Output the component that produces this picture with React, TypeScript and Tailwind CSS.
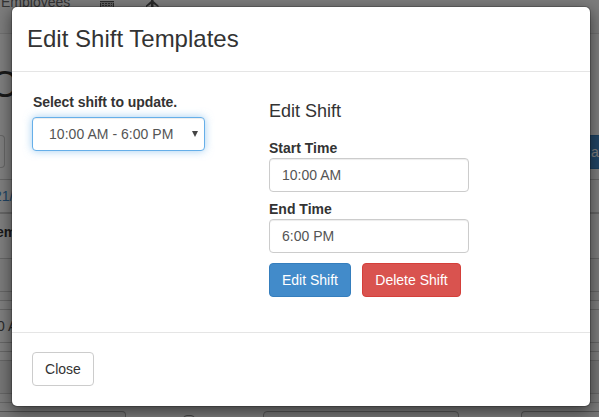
import type { ReactNode } from 'react';

function Line({ children, className = '' }: { children?: ReactNode; className?: string }) {
  return <div className={`shrink-0 overflow-hidden border-b border-[#ccc] ${className}`}>{children}</div>;
}

function Schedule() {
  return (
    <div className="flex h-full flex-col overflow-hidden bg-white">
      <nav className="relative h-[34px] shrink-0 border-b border-[#e0e0e0] bg-[#f8f8f8]">
        <span className="absolute left-px top-[-8px] text-[#666]">Employees</span>
        <svg className="absolute left-[100px] top-0" width="14" height="8" viewBox="0 0 14 8" fill="#555">
          <path d="M0 1h14v1H0zM0 3h1v5H0zM13 3h1v5h-1zM0 7h14v1H0zM2 3h2v1H2zM5 3h2v1H5zM8 3h2v1H8zM11 3h1v1h-1zM2 5h2v1H2zM5 5h2v1H5zM8 5h2v1H8zM11 5h1v1h-1z" />
          <path d="M0 1h14v6H0z" opacity=".35" />
        </svg>
        <svg className="absolute left-[145px] top-0" width="15" height="8" viewBox="0 0 15 8" fill="#555">
          <path d="M6 0h2.5v1l5 4.5v1.7L8.5 4v4H6V4L1 7.2V5.5L6 1z" />
        </svg>
      </nav>
      <h1 className="ml-[-9px] mt-[31px] h-10 shrink-0 text-4xl leading-10 text-[#333]">O</h1>
      <div className="mt-[30px] flex h-[33px] shrink-0 justify-between">
        <div className="w-[5px] rounded-r border border-l-0 border-[#ccc]" />
        <button className="h-[34px] w-[14px] overflow-hidden border-y border-[#357ebd] bg-[#428bca] pl-1.5 text-left text-white">at</button>
      </div>
      <Line className="h-3" />
      <Line className="h-[33px] pt-1.5 text-[#428bca]"><span className="ml-[-6px]">21/</span></Line>
      <Line className="h-px" />
      <Line className="h-[45px] pt-2 font-bold text-[#333]"><span className="ml-[-4px]">em</span></Line>
      <Line className="h-[33px] bg-[#f9f9f9]" />
      <Line className="h-[9px] bg-[#f9f9f9]" />
      <Line className="h-[9px]" />
      <Line className="h-[33px] pt-1.5 text-[#555]"><span className="ml-[-3px]">0 AM</span></Line>
      <Line className="h-[9px]" />
      <Line className="h-[9px]" />
      <Line className="h-[33px] bg-[#eee]" />
      <Line className="h-[9px] bg-[#f9f9f9]" />
      <div className="flex h-[15px] shrink-0 items-start bg-[#f9f9f9] pt-2">
        <div className="h-[34px] w-[126px] shrink-0 rounded-tr border border-l-0 border-[#aaa] bg-[#eee]" />
        <div className="ml-[57px] mt-1 h-3 w-3 shrink-0 rounded-sm border border-[#888]" />
        <div className="ml-[68px] h-[34px] w-[196px] shrink-0 rounded border border-[#aaa] bg-[#eee]" />
        <div className="ml-[62px] h-[34px] flex-1 rounded-l border border-r-0 border-[#aaa] bg-[#eee]" />
      </div>
    </div>
  );
}

const field = 'block h-[34px] w-[200px] rounded border border-[#ccc] bg-white px-3 text-sm text-[#555] shadow-[inset_0_1px_1px_rgba(0,0,0,0.075)] outline-none';

export default function App() {
  return (
    <div className="relative h-[417px] w-[599px] overflow-hidden font-['Liberation_Sans',sans-serif] text-sm text-[#333]">
      <Schedule />
      <div className="absolute inset-0 bg-black/50" />
      <div className="absolute left-[11px] top-1.5 flex h-[401px] w-[580px] flex-col rounded-md border border-black/20 bg-white bg-clip-padding shadow-[0_5px_15px_rgba(0,0,0,0.5)]">
        <header className="h-[65px] shrink-0 border-b border-[#e5e5e5] p-[15px]">
          <h3 className="text-2xl leading-[34px]">Edit Shift Templates</h3>
        </header>
        <main className="flex h-[260px] shrink-0 p-5">
          <section className="w-[237px]">
            <label className="mb-[5px] block pl-px font-bold leading-5 tracking-[-0.06px]">Select shift to update.</label>
            <button className="flex h-[34px] w-[173px] items-center justify-between rounded border border-[#66afe9] bg-white pl-4 pr-1.5 text-[#555] shadow-[inset_0_1px_1px_rgba(0,0,0,0.075),0_0_8px_rgba(102,175,233,0.6)]">
              <span className="tracking-[0.04px]">10:00 AM - 6:00 PM</span>
              <svg width="6" height="6" viewBox="0 0 6 6" fill="#444"><path d="M0 0h6L3 6z" /></svg>
            </button>
          </section>
          <section>
            <h4 className="mb-[17px] mt-[9px] text-lg leading-5">Edit Shift</h4>
            <label className="block font-bold leading-5">Start Time</label>
            <input className={field} defaultValue="10:00 AM" />
            <label className="mt-[7px] block font-bold leading-5">End Time</label>
            <input className={field} defaultValue="6:00 PM" />
            <div className="mt-[10px] flex gap-[11px]">
              <button className="h-[34px] w-[82px] rounded border border-[#357ebd] bg-[#428bca] text-white">Edit Shift</button>
              <button className="h-[34px] w-[99px] rounded border border-[#d43f3a] bg-[#d9534f] text-white">Delete Shift</button>
            </div>
          </section>
        </main>
        <footer className="flex-1 border-t border-[#e5e5e5] px-5 pt-[19px]">
          <button className="h-[34px] w-[62px] rounded border border-[#ccc] bg-white">Close</button>
        </footer>
      </div>
    </div>
  );
}
